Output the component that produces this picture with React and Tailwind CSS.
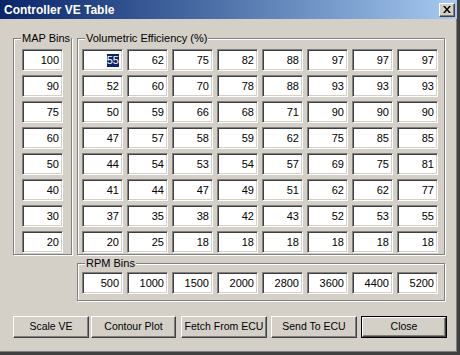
import React from 'react';

const mapBins = [100, 90, 75, 60, 50, 40, 30, 20];
const rpmBins = [500, 1000, 1500, 2000, 2800, 3600, 4400, 5200];
const veTable = [
  [55, 62, 75, 82, 88, 97, 97, 97],
  [52, 60, 70, 78, 88, 93, 93, 93],
  [50, 59, 66, 68, 71, 90, 90, 90],
  [47, 57, 58, 59, 62, 75, 85, 85],
  [44, 54, 53, 54, 57, 69, 75, 81],
  [41, 44, 47, 49, 51, 62, 62, 77],
  [37, 35, 38, 42, 43, 52, 53, 55],
  [20, 25, 18, 18, 18, 18, 18, 18],
];

const buttons = [
  { label: 'Scale VE', cls: 'w-[76px]' },
  { label: 'Contour Plot', cls: 'ml-[2px] w-[85px]' },
  { label: 'Fetch From ECU', cls: 'ml-[5px] w-[86px]' },
  { label: 'Send To ECU', cls: 'ml-[4px] w-[86px]' },
  { label: 'Close', cls: 'ml-[4px] w-[86px]', isDefault: true },
];

function Cell({ value, selected }) {
  return (
    <div className="w-[41px] h-[22px] bg-white border border-t-[#808080] border-l-[#808080] border-r-white border-b-white shadow-[inset_1px_1px_0_#404040,inset_-1px_-1px_0_#d4d0c8] flex items-center justify-end pr-[3px] pt-[1px]">
      {selected ? (
        <span className="bg-[#0a246a] text-white leading-[13px]">{value}</span>
      ) : (
        <span className="leading-[13px]">{value}</span>
      )}
    </div>
  );
}

function GroupBox({ label, className, children }) {
  return (
    <div className={`relative border border-[#808080] shadow-[1px_1px_0_#fff,inset_1px_1px_0_#fff] ${className}`}>
      <span className="absolute top-[-7px] left-[7px] bg-[#d4d0c8] px-[1px] leading-[13px] whitespace-nowrap">{label}</span>
      {children}
    </div>
  );
}

function App() {
  return (
    <div className="w-[460px] h-[355px] bg-[#d4d0c8] text-black text-[11px] font-['Liberation_Sans',Arial,sans-serif] flex flex-col overflow-hidden border-r-[3px] border-b-[3px] border-r-[#404040] border-b-[#404040] shadow-[inset_-1px_-1px_0_#808080]">
      {/* Title bar */}
      <div className="h-[19px] shrink-0 flex items-center justify-between bg-linear-to-r from-[#0a246a] to-[#a6caf0] pl-[4px] pr-[2px]">
        <span className="text-white font-bold text-[12px] leading-none">Controller VE Table</span>
        <div className="w-[16px] h-[14px] bg-[#d4d0c8] border border-t-white border-l-white border-r-[#404040] border-b-[#404040] shadow-[inset_-1px_-1px_0_#808080] flex items-center justify-center">
          <svg width="8" height="7" viewBox="0 0 8 7">
            <path d="M0 0h2l2 2.5L6 0h2L5 3.5 8 7H6L4 4.5 2 7H0l3-3.5z" fill="#000" />
          </svg>
        </div>
      </div>

      {/* Body */}
      <div className="flex flex-col pl-[13px] pt-[19px]">
        <div className="flex gap-[5px]">
          <GroupBox label="MAP Bins" className="w-[59px] h-[217px] pl-[8px] pt-[10px]">
            <div className="flex flex-col gap-[4px]">
              {mapBins.map((v) => (
                <Cell key={v} value={v} />
              ))}
            </div>
          </GroupBox>

          <GroupBox label="Volumetric Efficiency (%)" className="w-[368px] h-[217px] pl-[4px] pt-[10px]">
            <div className="grid grid-cols-[repeat(8,41px)] gap-[4px]">
              {veTable.map((row, r) =>
                row.map((v, c) => <Cell key={`${r}-${c}`} value={v} selected={r === 0 && c === 0} />)
              )}
            </div>
          </GroupBox>
        </div>

        <GroupBox label="RPM Bins" className="ml-[64px] mt-[8px] w-[368px] h-[38px] pl-[4px] pt-[8px]">
          <div className="flex gap-[4px]">
            {rpmBins.map((v) => (
              <Cell key={v} value={v} />
            ))}
          </div>
        </GroupBox>

        <div className="flex mt-[15px] text-[10.5px]">
          {buttons.map((b) =>
            b.isDefault ? (
              <div key={b.label} className={`h-[22px] border border-black ${b.cls}`}>
                <div className="h-full flex items-center justify-center border border-t-white border-l-white border-r-[#404040] border-b-[#404040] shadow-[inset_-1px_-1px_0_#808080]">
                  {b.label}
                </div>
              </div>
            ) : (
              <div
                key={b.label}
                className={`h-[22px] flex items-center justify-center border border-t-white border-l-white border-r-[#404040] border-b-[#404040] shadow-[inset_-1px_-1px_0_#808080] ${b.cls}`}
              >
                {b.label}
              </div>
            )
          )}
        </div>
      </div>
    </div>
  );
}

export default App;
